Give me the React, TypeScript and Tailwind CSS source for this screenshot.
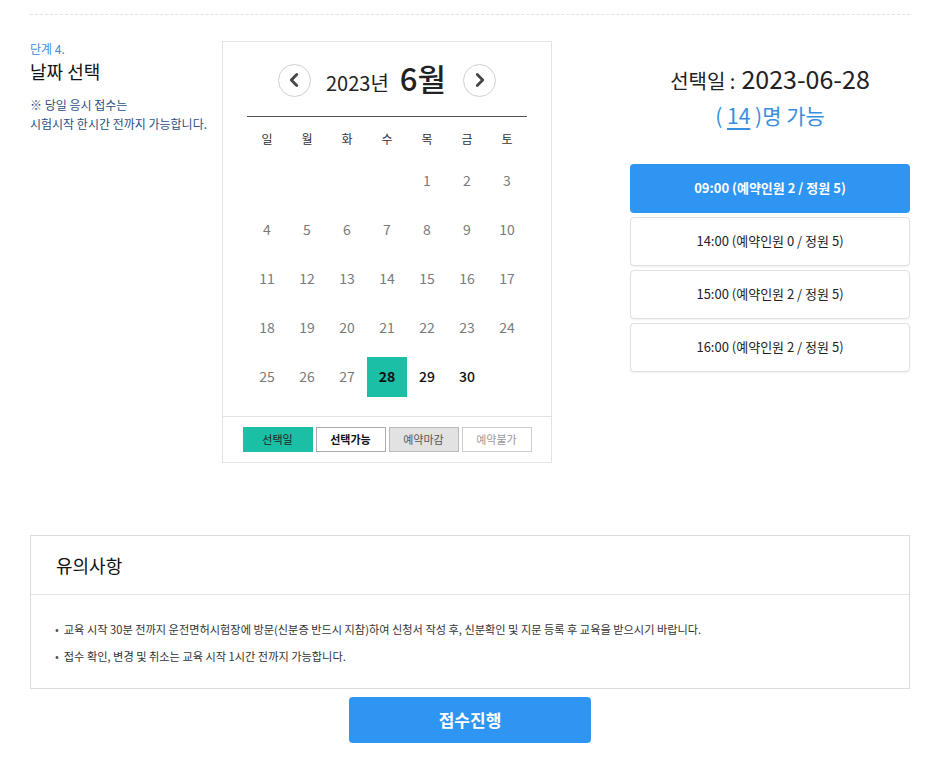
import { ChevronLeft, ChevronRight } from 'lucide-react';

const weekdays = ['일', '월', '화', '수', '목', '금', '토'];

// June 2023 starts on Thursday
const cells: (number | null)[] = [null, null, null, null, ...Array.from({ length: 30 }, (_, i) => i + 1), null];

const slots = [
  { time: '09:00', booked: 2, cap: 5, active: true },
  { time: '14:00', booked: 0, cap: 5, active: false },
  { time: '15:00', booked: 2, cap: 5, active: false },
  { time: '16:00', booked: 2, cap: 5, active: false },
];

const font = { fontFamily: '"Noto Sans CJK KR", "Noto Sans", sans-serif' };

function Calendar() {
  const rows: (number | null)[][] = [];
  for (let i = 0; i < cells.length; i += 7) rows.push(cells.slice(i, i + 7));

  return (
    <div className="w-[330px] border border-[#e3e3e3] bg-white">
      <div className="flex items-center justify-center pt-[20px]">
        <button className="flex h-[33px] w-[33px] items-center justify-center rounded-full border border-[#cfcfcf] text-[#444]">
          <ChevronLeft size={22} strokeWidth={3} />
        </button>
        <div className="ml-[15px] mr-[17px] flex items-baseline text-[#222]">
          <span className="text-[20px]">2023년</span>
          <span className="ml-[11px] text-[31px] font-medium leading-none">6월</span>
        </div>
        <button className="flex h-[33px] w-[33px] items-center justify-center rounded-full border border-[#cfcfcf] text-[#444]">
          <ChevronRight size={22} strokeWidth={3} />
        </button>
      </div>
      <div className="mx-[24px] mt-[18px] border-t border-[#555]" />
      <div className="mx-[24px] grid h-[39px] grid-cols-7 pt-[5px]">
        {weekdays.map((d) => (
          <div key={d} className="flex items-center justify-center text-[12px] text-[#333]">
            {d}
          </div>
        ))}
      </div>
      <div className="mx-[24px]">
        {rows.map((row, ri) => (
          <div key={ri} className="grid h-[49px] grid-cols-7">
            {row.map((d, ci) => (
              <div key={ci} className="flex items-center justify-center">
                {d !== null && (
                  <div
                    className={
                      d === 28
                        ? 'flex h-[40px] w-[40px] items-center justify-center bg-[#1bbfa5] text-[14px] font-bold text-[#111]'
                        : d > 28
                        ? 'flex h-[40px] w-[40px] items-center justify-center text-[14px] font-medium text-[#111]'
                        : 'flex h-[40px] w-[40px] items-center justify-center text-[14px] text-[#7a7a7a]'
                    }
                  >
                    {d}
                  </div>
                )}
              </div>
            ))}
          </div>
        ))}
      </div>
      <div className="mt-[15px] flex justify-center gap-[3px] border-t border-[#e3e3e3] py-[10px]">
        <div className="flex h-[25px] w-[70px] items-center justify-center bg-[#1bbfa5] text-[11px] text-[#222]">선택일</div>
        <div className="flex h-[25px] w-[70px] items-center justify-center border border-[#aaa] text-[11px] font-bold text-[#111]">선택가능</div>
        <div className="flex h-[25px] w-[70px] items-center justify-center border border-[#bbb] bg-[#e2e2e2] text-[11px] text-[#555]">예약마감</div>
        <div className="flex h-[25px] w-[70px] items-center justify-center border border-[#ccc] text-[11px] text-[#999]">예약불가</div>
      </div>
    </div>
  );
}

export default function App() {
  return (
    <div className="min-h-[771px] bg-white pl-[30px] pr-[27px] pt-[14px]" style={font}>
      <div className="border-t border-dashed border-[#e2e2e2]" />

      <div className="mt-[26px] flex">
        <div className="w-[192px]">
          <p className="text-[12px] leading-[16px] text-[#3a8ee0]">단계 4.</p>
          <h2 className="mt-[2px] text-[18px] leading-[24px] text-[#111]">날짜 선택</h2>
          <p className="mt-[12px] text-[12px] leading-[19px] text-[#2c4f86]">
            ※ 당일 응시 접수는
            <br />
            시험시작 한시간 전까지 가능합니다.
          </p>
        </div>

        <Calendar />

        <div className="ml-auto w-[280px]">
          <div className="mt-[25px] flex items-baseline justify-center text-[#222]">
            <span className="text-[20px]">선택일 :</span>
            <span className="ml-[6px] text-[25px] leading-none">2023-06-28</span>
          </div>
          <div className="mt-[4px] text-center text-[21px] text-[#3a8ee0]">
            ( <span className="underline underline-offset-4">14</span> )명 가능
          </div>
          <div className="mt-[32px] flex flex-col gap-[4px]">
            {slots.map((s) => (
              <button
                key={s.time}
                className={
                  s.active
                    ? 'flex h-[49px] items-center justify-center rounded-[4px] bg-[#2e95f3] text-[13px] font-bold text-white'
                    : 'flex h-[49px] items-center justify-center rounded-[4px] border border-[#e0e0e0] bg-white text-[13px] text-[#222] shadow-[0_1px_2px_rgba(0,0,0,0.06)]'
                }
              >
                {s.time} (예약인원 {s.booked} / 정원 {s.cap})
              </button>
            ))}
          </div>
        </div>
      </div>

      <div className="mt-[72px] border border-[#dcdcdc]">
        <div className="flex h-[59px] items-center border-b border-[#e3e3e3] px-[25px] text-[18px] text-[#111]">
          유의사항
        </div>
        <ul className="px-[24px] pb-[18px] pt-[21px] text-[11.2px] text-[#333]">
          <li className="flex h-[27px] items-center">
            <span className="mr-[5px] text-[#555]">•</span>
            교육 시작 30분 전까지 운전면허시험장에 방문(신분증 반드시 지참)하여 신청서 작성 후, 신분확인 및 지문 등록 후 교육을 받으시기 바랍니다.
          </li>
          <li className="flex h-[27px] items-center">
            <span className="mr-[5px] text-[#555]">•</span>
            접수 확인, 변경 및 취소는 교육 시작 1시간 전까지 가능합니다.
          </li>
        </ul>
      </div>

      <div className="mt-[8px] flex justify-center">
        <button className="h-[46px] w-[242px] rounded-[4px] bg-[#2e95f3] text-[17px] font-bold text-white">
          접수진행
        </button>
      </div>
    </div>
  );
}
